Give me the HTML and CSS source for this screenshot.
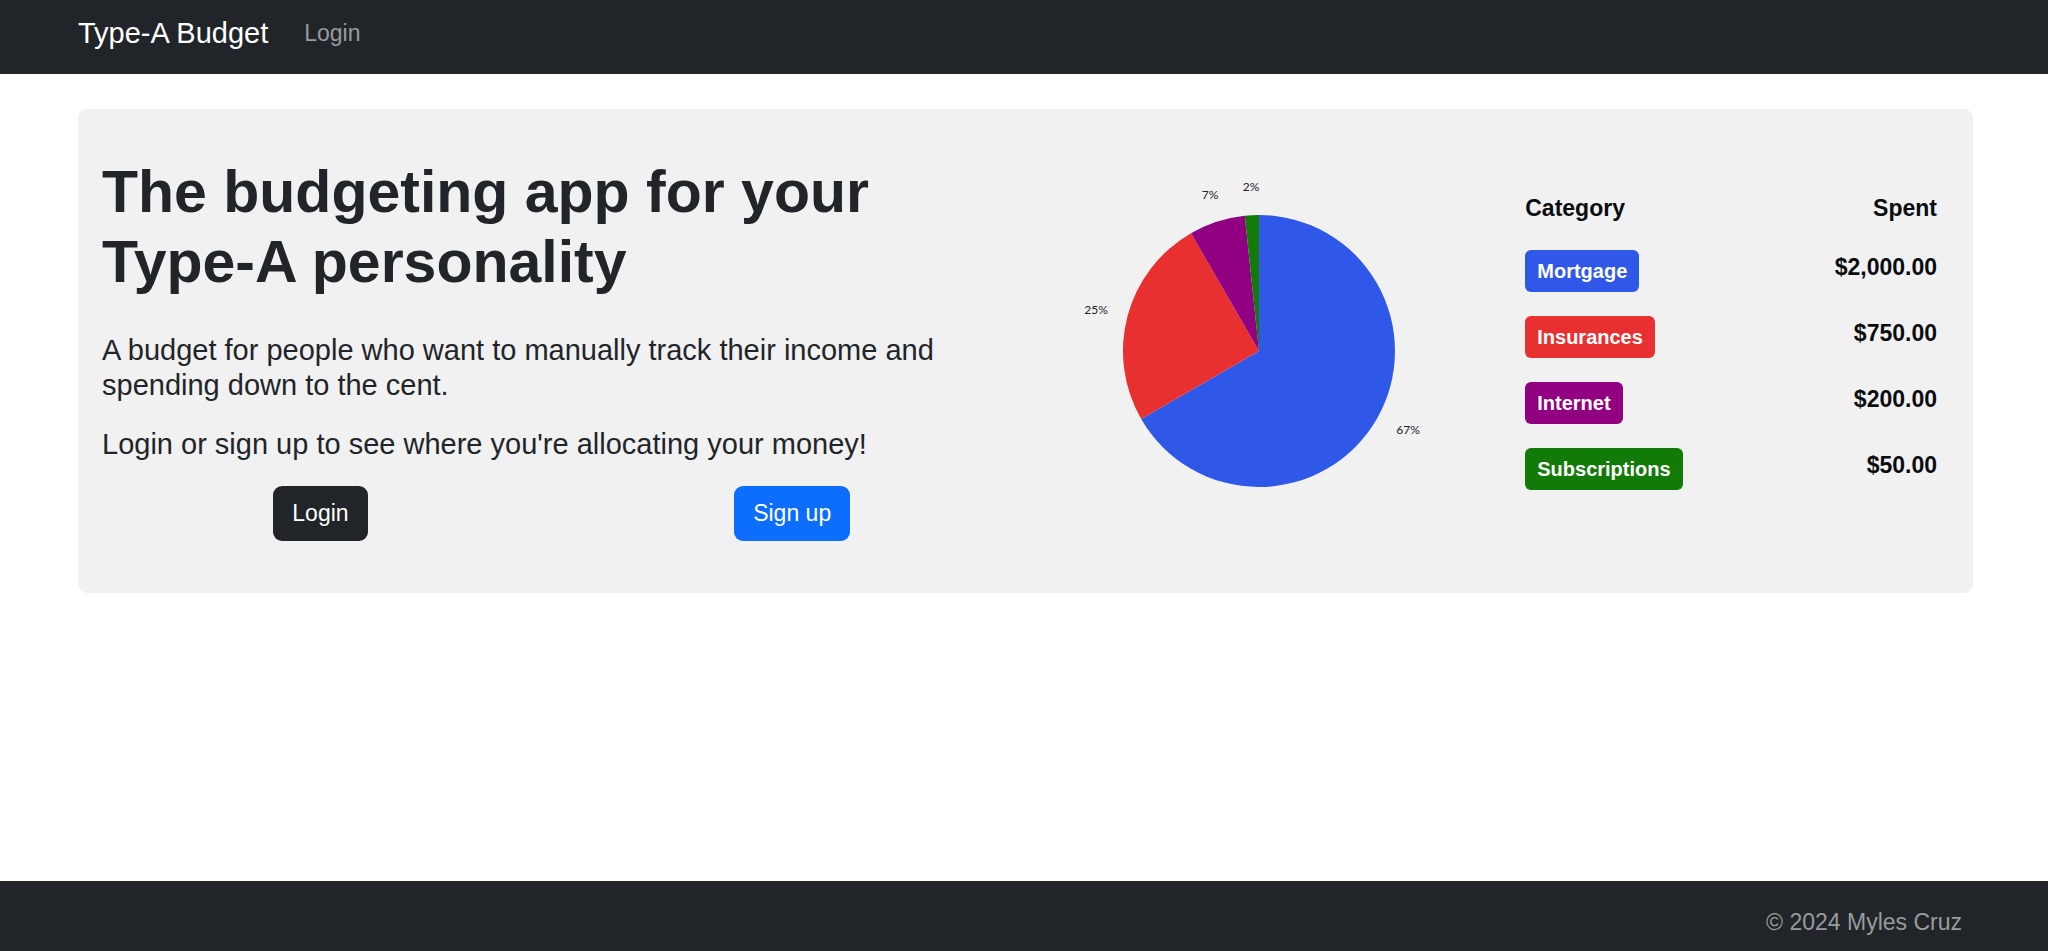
FILE: index.html
```html
<!DOCTYPE html>
<html lang="en">
<head>
    <meta charset="UTF-8">
    <meta name="viewport" content="width=device-width, initial-scale=1.0">
    <title>Type-A Budget</title>
    <link rel="stylesheet" href="styles.css">
</head>
<body>

<!-- Navbar -->
<nav class="navbar">
    <a class="navbar-brand" href="#">Type-A Budget</a>
    <a class="nav-link" href="#">Login</a>
</nav>

<main class="container">
    <div class="hero">
        <div class="intro">
            <h1>The budgeting app for your Type-A personality</h1>
            <p>A budget for people who want to manually track their income and spending down to the cent.</p>
            <p>Login or sign up to see where you're allocating your money!</p>
            <div class="buttons">
                <button type="button" class="btn btn-dark">Login</button>
                <button type="button" class="btn btn-primary">Sign up</button>
            </div>
        </div>

        <!-- Spending chart -->
        <svg class="chart" viewBox="-180 -180 360 360" role="img" aria-label="Spending by category">
            <path fill="#3058e8" d="M0 0 V-136 A136 136 0 1 1 -117.8 68 Z"/>
            <path fill="#e83030" d="M0 0 L-117.8 68 A136 136 0 0 1 -68 -117.8 Z"/>
            <path fill="#900080" d="M0 0 L-68 -117.8 A136 136 0 0 1 -14.2 -135.3 Z"/>
            <path fill="#127a06" d="M0 0 L-14.2 -135.3 A136 136 0 0 1 0 -136 Z"/>
            <text x="149" y="83">67%</text>
            <text x="-163" y="-37">25%</text>
            <text x="-49" y="-152">7%</text>
            <text x="-8" y="-160">2%</text>
        </svg>

        <!-- Spending by category -->
        <table class="spending">
            <thead>
                <tr>
                    <th>Category</th>
                    <th class="amount">Spent</th>
                </tr>
            </thead>
            <tbody>
                <tr>
                    <td><span class="badge mortgage">Mortgage</span></td>
                    <td class="amount">$2,000.00</td>
                </tr>
                <tr>
                    <td><span class="badge insurances">Insurances</span></td>
                    <td class="amount">$750.00</td>
                </tr>
                <tr>
                    <td><span class="badge internet">Internet</span></td>
                    <td class="amount">$200.00</td>
                </tr>
                <tr>
                    <td><span class="badge subscriptions">Subscriptions</span></td>
                    <td class="amount">$50.00</td>
                </tr>
            </tbody>
        </table>
    </div>
</main>

<footer class="footer">
    <span>&copy; 2024 Myles Cruz</span>
</footer>

</body>
</html>
```
FILE: styles.css
```css
* {
    box-sizing: border-box;
}
body {
    font-family: "Liberation Sans", Arial, sans-serif;
    font-size: 23px;
    line-height: 35px;
    margin: 0;
    color: #212529;
    background-color: #fff;
    min-height: 100vh;
    display: flex;
    flex-direction: column;
}
.navbar {
    display: flex;
    align-items: center;
    gap: 36px;
    padding: 16px 78px 23px;
    background-color: #212529;
}
.navbar-brand {
    font-size: 29px;
    color: #fff;
    text-decoration: none;
}
.nav-link {
    color: #999b9d;
    text-decoration: none;
}
.container {
    flex: 1;
    padding: 35px 75px 35px 78px;
}
.hero {
    display: grid;
    grid-template-columns: 2fr 1fr 1fr;
    align-items: center;
    padding: 48px 12px;
    background-color: #f1f1f1;
    border-radius: 9px;
}
h1 {
    font-size: 59px;
    line-height: 70px;
    margin: 0 12px 36px;
}
.intro p {
    font-size: 29px;
    margin: 0 12px 24px;
}
.buttons {
    display: flex;
    justify-content: space-around;
    margin: 0 -8px 4px 0;
}
.btn {
    font-family: inherit;
    font-size: 23px;
    line-height: 35px;
    padding: 10px 19px;
    border: none;
    border-radius: 9px;
    color: #fff;
    cursor: pointer;
}
.btn-dark {
    background-color: #212529;
}
.btn-primary {
    background-color: #0d6efd;
}
.chart {
    width: 360px;
    justify-self: center;
}
.chart text {
    font-family: Lato, sans-serif;
    font-size: 12px;
    text-anchor: middle;
    fill: #212529;
}
.spending {
    border-collapse: collapse;
    margin: 0 24px 22px 32px;
    font-weight: bold;
    color: #0a0c0f;
}
.spending th, .spending td {
    padding: 12px 0;
    text-align: left;
    vertical-align: top;
}
.spending .amount {
    text-align: right;
}
.badge {
    display: block;
    width: fit-content;
    font-size: 20px;
    line-height: 22px;
    padding: 10px 12px;
    border-radius: 6px;
    color: #fff;
}
.mortgage {
    background-color: #3058e8;
}
.insurances {
    background-color: #e83030;
}
.internet {
    background-color: #900080;
}
.subscriptions {
    background-color: #127a06;
}
.footer {
    padding: 24px 86px 11px;
    text-align: right;
    color: #999b9d;
    background-color: #212529;
}
```
